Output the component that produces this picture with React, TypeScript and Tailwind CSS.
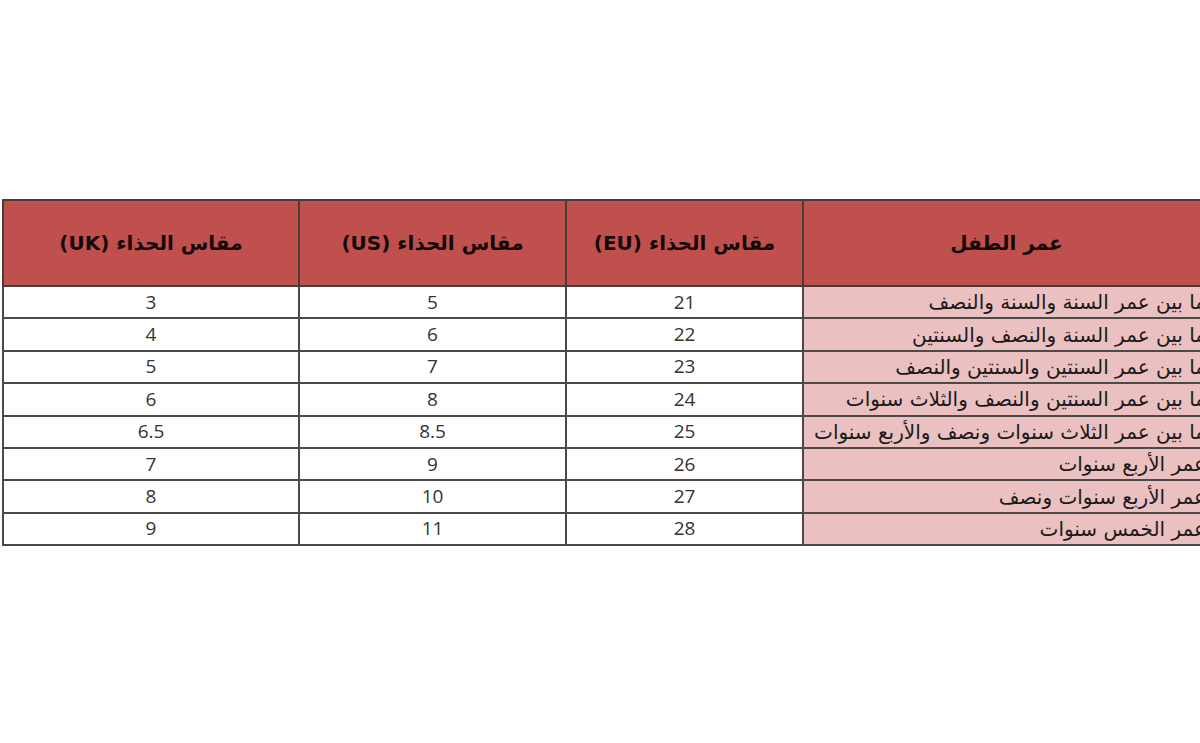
import React from "react"

type Row = {
  age: string
  eu: string
  us: string
  uk: string
}

const rows: Row[] = [
  { age: "ما بين عمر السنة والسنة والنصف", eu: "21", us: "5", uk: "3" },
  { age: "ما بين عمر السنة والنصف والسنتين", eu: "22", us: "6", uk: "4" },
  { age: "ما بين عمر السنتين والسنتين والنصف", eu: "23", us: "7", uk: "5" },
  { age: "ما بين عمر السنتين والنصف والثلاث سنوات", eu: "24", us: "8", uk: "6" },
  { age: "ما بين عمر الثلاث سنوات ونصف والأربع سنوات", eu: "25", us: "8.5", uk: "6.5" },
  { age: "عمر الأربع سنوات", eu: "26", us: "9", uk: "7" },
  { age: "عمر الأربع سنوات ونصف", eu: "27", us: "10", uk: "8" },
  { age: "عمر الخمس سنوات", eu: "28", us: "11", uk: "9" },
]

const arabic = "font-['DejaVu_Sans','Noto_Sans',sans-serif]"
const num = "font-['Open_Sans','Liberation_Sans',sans-serif]"

// table runs a little past the right edge of the page, like the cropped original
export default function App() {
  return (
    <div className="w-[1200px] h-[743px] bg-white overflow-hidden">
      <div className="pt-[199px] pl-[2px]">
        <table dir="rtl" className="w-[1207px] table-fixed border-collapse">
          <colgroup>
            <col className="w-[407px]" />
            <col className="w-[237px]" />
            <col className="w-[267px]" />
            <col className="w-[296px]" />
          </colgroup>
          <thead>
            <tr className="h-[86px] bg-[#c0504d]">
              <th className={`border-2 border-[#4a3a3a] text-center text-[20px] font-bold text-[#140808] ${arabic}`}>
                عمر الطفل
              </th>
              <th className={`border-2 border-[#4a3a3a] text-center text-[20px] font-bold text-[#140808] ${arabic}`}>
                مقاس الحذاء (EU)
              </th>
              <th className={`border-2 border-[#4a3a3a] text-center text-[20px] font-bold text-[#140808] ${arabic}`}>
                مقاس الحذاء (US)
              </th>
              <th className={`border-2 border-[#4a3a3a] text-center text-[20px] font-bold text-[#140808] ${arabic}`}>
                مقاس الحذاء (UK)
              </th>
            </tr>
          </thead>
          <tbody>
            {rows.map((row) => (
              <tr key={row.eu} className="h-[32.4px]">
                <td className={`border-2 border-[#4a4a4a] bg-[#ebc0c1] pr-[3px] pl-[4px] text-right text-[20px] leading-none whitespace-nowrap text-[#1a1a1a] ${arabic}`}>
                  {row.age}
                </td>
                <td className={`border-2 border-[#4a4a4a] text-center text-[19px] leading-none text-[#333] ${num}`}>
                  {row.eu}
                </td>
                <td className={`border-2 border-[#4a4a4a] text-center text-[19px] leading-none text-[#333] ${num}`}>
                  {row.us}
                </td>
                <td className={`border-2 border-[#4a4a4a] text-center text-[19px] leading-none text-[#333] ${num}`}>
                  {row.uk}
                </td>
              </tr>
            ))}
          </tbody>
        </table>
      </div>
    </div>
  )
}
